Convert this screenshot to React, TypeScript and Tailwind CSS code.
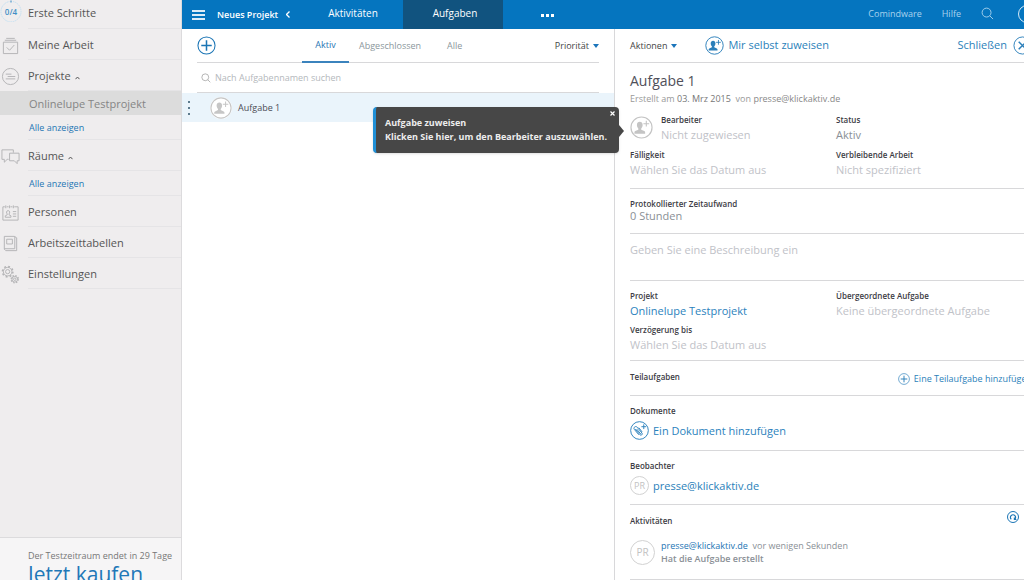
import type { ReactNode } from "react";

function PersonPlus({ className }: { className: string }) {
  return (
    <svg className={className} viewBox="0 0 24 24" fill="none" stroke="currentColor">
      <circle cx="12" cy="12" r="11" strokeWidth="1.2" />
      <path
        d="M7.2 9.4C7.2 7 8.500 6 10.200 6s3 1 3 3.400c0 1.500-.7 2.800-1.500 3.600v1.300l3.200 1.400c.6.300.9.700.9 1.400v1.300H4.600v-1.300c0-.7.3-1.100.9-1.400l3.200-1.400V13c-.8-.8-1.500-2.100-1.500-3.600z"
        fill="currentColor"
        stroke="none"
      />
      <path d="M17 5v6M14 8h6" strokeWidth="1.1" />
    </svg>
  );
}

function CirclePlus({ className }: { className: string }) {
  return (
    <svg className={className} viewBox="0 0 20 20" fill="none" stroke="currentColor">
      <circle cx="10" cy="10" r="9" strokeWidth="1.1" />
      <path d="M10 4.5v11M4.5 10h11" strokeWidth="1.6" />
    </svg>
  );
}

function SearchIcon({ className }: { className: string }) {
  return (
    <svg className={className} viewBox="0 0 14 14" fill="none" stroke="currentColor">
      <circle cx="6" cy="6" r="4.8" />
      <path d="M9.5 9.5L13 13" />
    </svg>
  );
}

function Caret() {
  return (
    <svg className="h-1 w-1.5 text-[#1b75bb]" viewBox="0 0 6 4" fill="currentColor">
      <path d="M0 0h6L3 4z" />
    </svg>
  );
}

const ICONS: Record<string, ReactNode> = {
  work: (
    <>
      <path d="M2.5 6.5h15v12h-15zM4 4.5h12M5.5 2.5h9" />
      <path d="M6 12l3 3 5-5.5" />
    </>
  ),
  projects: (
    <>
      <circle cx="10" cy="10" r="8.5" />
      <path d="M5 7.5h6M7 10h8M5 12.5h10" />
    </>
  ),
  rooms: (
    <>
      <path d="M8 13H6.5l-3 3v-3H1V3h12v3" />
      <path d="M9 6.5h10v8h-2v3l-3-3H9z" />
    </>
  ),
  people: (
    <>
      <path d="M2 4h2M6 4h2M10 4h2M14 4h4v14H2V4M5 2.5v3M9 2.5v3M13 2.5v3" />
      <path d="M4.5 15v-1.5l2-1v-1c-1-1-1-3.5 1-3.5s2 2.5 1 3.5v1l2 1V15zM12.5 9H16M12.5 11.5H16M12.5 14H16" />
    </>
  ),
  sheets: (
    <>
      <path d="M3.5 2.5h10.5l2.5 1.500v13.500H5l-1.500-1.500zM3.500 15.500h11V2.500" />
      <path d="M6 5.500h6v5H6z" />
    </>
  ),
  settings: (
    <>
      <circle cx="7" cy="7" r="2.2" />
      <circle cx="7" cy="7" r="4.5" />
      <circle cx="7" cy="7" r="5.5" strokeDasharray="2 2.3" strokeWidth="1.6" />
      <circle cx="14.5" cy="15" r="1.3" />
      <circle cx="14.5" cy="15" r="3" />
      <circle cx="14.5" cy="15" r="3.8" strokeDasharray="1.5 1.5" strokeWidth="1.4" />
    </>
  ),
};

function NavRow({ icon, label, open }: { icon: string; label: string; open?: boolean }) {
  return (
    <div className="flex h-[31px] items-stretch">
      <div className="flex w-7 items-center pt-0.5 pl-px">
        <svg className="size-[19px] text-[#b3b3b5]" viewBox="0 0 20 20" fill="none" stroke="currentColor">
          {ICONS[icon]}
        </svg>
      </div>
      <a href="#" className="flex flex-1 items-center gap-1 border-b border-[#e5e4e6] pt-0.5 text-[11px] text-[#555]">
        {label}
        {open && (
          <svg className="mt-1 h-1 w-[5px]" viewBox="0 0 5 4" fill="none" stroke="currentColor">
            <path d="M.5 3.2l2-2.2 2 2.2" />
          </svg>
        )}
      </a>
    </div>
  );
}

function NavShowAll() {
  return (
    <a href="#" className="ml-7 flex h-[25px] items-center border-b border-[#e5e4e6] pt-0.5 pl-px text-[9px] text-[#2476b4]">
      Alle anzeigen
    </a>
  );
}

function Sidebar() {
  return (
    <aside className="flex w-[182px] shrink-0 flex-col border-r border-[#dcdbdd] bg-[#efedee]">
      <nav className="flex-1">
        <div className="flex h-[29px]">
          <div className="w-7">
            <svg className="size-[22px]" viewBox="0 0 22 22" fill="none">
              <path d="M13 1.5a10.3 10.3 0 0 1-4 20.2A10.3 10.3 0 0 1 9.5 1.5" stroke="#c3e0f2" strokeDasharray="1.5 .7" />
              <path d="M11 .5v2" stroke="#2f87c4" />
              <text x="11" y="15" textAnchor="middle" fontSize="8" fontWeight="600" fill="#3f8fc6">
                0/4
              </text>
            </svg>
          </div>
          <a href="#" className="flex flex-1 items-center border-b border-[#e5e4e6] pb-0.5 text-[11px] text-[#555]">
            Erste Schritte
          </a>
        </div>
        <NavRow icon="work" label="Meine Arbeit" />
        <NavRow icon="projects" label="Projekte" open />
        <a href="#" className="flex h-6 items-center bg-[#dcdcdc] pt-0.5 pl-[29px] text-[11px] text-[#858585]">
          Onlinelupe Testprojekt
        </a>
        <NavShowAll />
        <NavRow icon="rooms" label="Räume" open />
        <NavShowAll />
        <NavRow icon="people" label="Personen" />
        <NavRow icon="sheets" label="Arbeitszeittabellen" />
        <NavRow icon="settings" label="Einstellungen" />
      </nav>
      <div className="h-[43px] overflow-hidden border-t border-[#dcdbdd] bg-[#f6f5f6] pt-3 pl-7 whitespace-nowrap">
        <p className="text-[9px] leading-3 text-[#777]">Der Testzeitraum endet in 29 Tage</p>
        <a href="#" className="block text-[21px] leading-6 text-[#1f78b8]">
          Jetzt kaufen
        </a>
      </div>
    </aside>
  );
}

function TopBar() {
  return (
    <header className="flex h-[29px] shrink-0 items-stretch bg-[#0575bf] text-[10px] text-white">
      <div className="flex w-[121px] items-center gap-3 pl-2.5">
        <button aria-label="Menü" className="flex w-[13px] flex-col gap-0.5">
          <span className="h-0.5 w-full bg-[#dcecf7]" />
          <span className="h-0.5 w-full bg-[#dcecf7]" />
          <span className="h-0.5 w-full bg-[#dcecf7]" />
        </button>
        <a href="#" className="flex items-center gap-2 text-[9px] font-semibold whitespace-nowrap">
          Neues Projekt
          <svg className="h-[7px] w-1" viewBox="0 0 4 7" fill="none" stroke="currentColor" strokeWidth="1.3">
            <path d="M3.5 .5l-3 3 3 3" />
          </svg>
        </a>
      </div>
      <a href="#" className="flex w-[100px] items-center justify-center pb-0.5">Aktivitäten</a>
      <a href="#" className="flex w-[100px] items-center justify-center bg-[#11537f] pb-0.5 pl-1">Aufgaben</a>
      <button aria-label="Mehr" className="flex w-[88px] items-center justify-center gap-0.5 pt-0.5">
        <span className="size-[3px] bg-white" />
        <span className="size-[3px] bg-white" />
        <span className="size-[3px] bg-white" />
      </button>
      <div className="-mr-3 ml-auto flex items-center gap-5 pb-0.5 text-[9px] text-[#a9d3ee]">
        <a href="#">Comindware</a>
        <a href="#">Hilfe</a>
        <button aria-label="Suchen" className="mr-1">
          <SearchIcon className="size-[13px]" />
        </button>
        <button aria-label="Profil" className="size-[18px] rounded-full border border-[#d5eaf7]" />
      </div>
    </header>
  );
}

function Tooltip() {
  return (
    <div
      role="tooltip"
      className="absolute top-3.5 -right-[5px] z-10 w-[246px] rounded border-l-[3px] border-[#1f8fd6] bg-[#474747] py-[9px] pl-[9px] text-[9px] leading-[14px] font-bold whitespace-nowrap text-[#ededed] shadow-sm"
    >
      <p>Aufgabe zuweisen</p>
      <p>Klicken Sie hier, um den Bearbeiter auszuwählen.</p>
      <button aria-label="Schließen" className="absolute top-1 right-1 text-white">
        <svg className="size-[5px]" viewBox="0 0 5 5" fill="none" stroke="currentColor" strokeWidth="1.2">
          <path d="M.5 .5l4 4M4.5 .5l-4 4" />
        </svg>
      </button>
      <svg className="absolute top-[18px] -right-[5px] h-3 w-[5px]" viewBox="0 0 5 12" fill="#474747">
        <path d="M0 0l5 6-5 6z" />
      </svg>
    </div>
  );
}

function TaskList() {
  return (
    <main className="min-w-0 flex-1 text-[9px]">
      <div className="mx-[15px] flex h-[34px] items-stretch border-b border-[#d8d8da]">
        <button aria-label="Neue Aufgabe" className="mr-[86px] text-[#1b75b5]">
          <CirclePlus className="size-[19px]" />
        </button>
        <button className="-mb-px w-[47px] border-b-2 border-[#3b83bd] font-medium text-[#2a77b3]">Aktiv</button>
        <button className="ml-2.5 text-[#8b979c]">Abgeschlossen</button>
        <button className="ml-[26px] text-[#8b979c]">Alle</button>
        <button className="ml-auto flex items-center gap-1 text-[#444]">
          Priorität
          <Caret />
        </button>
      </div>
      <label className="mx-[15px] flex h-[30px] items-center gap-1 border-b border-[#d8d8da] pl-1">
        <SearchIcon className="size-2.5 text-[#999]" />
        <input
          aria-label="Nach Aufgabennamen suchen"
          placeholder="Nach Aufgabennamen suchen"
          className="flex-1 outline-none placeholder:text-[#b4b8bc]"
        />
      </label>
      <div className="relative flex h-[29px] items-center bg-[#eaf4fb] pr-[22px] text-[#4c4c55]">
        <div className="flex w-7 flex-col gap-1 pl-1.5">
          <span className="size-0.5 bg-[#5d7b8d]" />
          <span className="size-0.5 bg-[#5d7b8d]" />
          <span className="size-0.5 bg-[#5d7b8d]" />
        </div>
        <span className="mr-1.5 rounded-full bg-white text-[#c6c6c6]">
          <PersonPlus className="size-[22px]" />
        </span>
        <a href="#">Aufgabe 1</a>
        <svg className="ml-auto h-1.5 w-[60px] text-[#a9b4bc]" viewBox="0 0 60 6" fill="none" stroke="currentColor">
          <path d="M1 5a3.500 3.500 0 0 1 6 0M54 5l2.500-3L59 5" />
        </svg>
        <Tooltip />
      </div>
    </main>
  );
}

function Field({ label, value, tone = "empty" }: { label: string; value: string; tone?: "empty" | "set" | "link" }) {
  const tones = { empty: "text-[#bfc2c8]", set: "text-[#8a9096]", link: "text-[#2b82bd]" };
  return (
    <div>
      <p className="text-[8px] leading-[14px] font-semibold text-[#3c3c44]">{label}</p>
      {tone === "link" ? (
        <a href="#" className={`block text-[11px] leading-[15px] ${tones.link}`}>{value}</a>
      ) : (
        <p className={`text-[11px] leading-[15px] ${tones[tone]}`}>{value}</p>
      )}
    </div>
  );
}

function Label({ children }: { children: ReactNode }) {
  return <h2 className="text-[8px] leading-3 font-semibold text-[#3c3c44]">{children}</h2>;
}

function Initials({ className }: { className: string }) {
  return (
    <span className={`flex shrink-0 items-center justify-center rounded-full border border-[#d2d2d2] text-[#c2c2c2] ${className}`}>
      PR
    </span>
  );
}

function TaskDetail() {
  return (
    <section className="w-[410px] shrink-0 overflow-hidden border-l border-[#d8d8da] pl-[15px]">
      {/* the panel is a little wider than its column and runs off the window */}
      <div className="min-w-[402px] whitespace-nowrap">
        <div className="flex h-[34px] items-center border-b border-[#d8d8da] text-[11px] text-[#2b7fba]">
          <button className="flex items-center gap-1 text-[9px] text-[#444]">
            Aktionen
            <Caret />
          </button>
          <button className="ml-7 flex items-center gap-1">
            <PersonPlus className="size-[19px]" />
            Mir selbst zuweisen
          </button>
          <button className="ml-auto flex items-center gap-1.5">
            Schließen
            <svg className="size-[19px]" viewBox="0 0 20 20" fill="none" stroke="currentColor">
              <circle cx="10" cy="10" r="9" />
              <path d="M6 6l8 8M14 6l-8 8" strokeWidth="1.6" />
            </svg>
          </button>
        </div>

        <div className="h-[126px] border-b border-[#d8d8da] pt-2">
          <h1 className="text-[14px] leading-5 text-[#50505a]">Aufgabe 1</h1>
          <p className="text-[9px] leading-4 text-[#999]">
            Erstellt am <span className="text-[#777]">03. Mrz 2015</span> &nbsp;von{" "}
            <span className="text-[#888]">presse@klickaktiv.de</span>
          </p>
          <div className="mt-1.5 grid grid-cols-[206px_1fr] gap-y-1.5">
            <div className="flex items-center gap-2">
              <PersonPlus className="size-[23px] text-[#c4c4c4]" />
              <Field label="Bearbeiter" value="Nicht zugewiesen" />
            </div>
            <Field label="Status" value="Aktiv" tone="set" />
            <Field label="Fälligkeit" value="Wählen Sie das Datum aus" />
            <Field label="Verbleibende Arbeit" value="Nicht spezifiziert" />
          </div>
        </div>

        <div className="h-[45px] border-b border-[#d8d8da] pt-[9px]">
          <Label>Protokollierter Zeitaufwand</Label>
          <p className="text-[11px] leading-3 text-[#8a9096]">0 Stunden</p>
        </div>

        <div className="h-[47px] border-b border-[#d8d8da] pt-2 text-[11px] leading-4 text-[#bfc2c8]">
          Geben Sie eine Beschreibung ein
        </div>

        <div className="grid h-20 grid-cols-[206px_1fr] content-start gap-y-[5px] border-b border-[#d8d8da] pt-2">
          <Field label="Projekt" value="Onlinelupe Testprojekt" tone="link" />
          <Field label="Übergeordnete Aufgabe" value="Keine übergeordnete Aufgabe" />
          <Field label="Verzögerung bis" value="Wählen Sie das Datum aus" />
        </div>

        <div className="flex h-[35px] items-start justify-between border-b border-[#d8d8da] pt-2.5">
          <Label>Teilaufgaben</Label>
          <button className="flex items-center gap-1 pt-px text-[9px] font-medium text-[#2b7fba]">
            <CirclePlus className="size-3" />
            Eine Teilaufgabe hinzufügen
          </button>
        </div>

        <div className="h-[55px] border-b border-[#d8d8da] pt-[9px]">
          <Label>Dokumente</Label>
          <button className="mt-1 flex items-center gap-1 text-[11px] leading-4 text-[#2b82bd]">
            <svg className="size-[19px]" viewBox="0 0 20 20" fill="none" stroke="currentColor">
              <circle cx="10" cy="10" r="9.3" />
              <path d="M5.5 8.5l5 6c1 1.2 3.2-.3 2.2-1.7L7.5 6.5C6 4.7 3 7 4.6 8.9l4.7 5.6M7 8.500l4.300 5.200M9.200 7l3.600 4.500" />
              <path d="M14.5 3.5v5M12 6h5" />
            </svg>
            Ein Dokument hinzufügen
          </button>
        </div>

        <div className="h-[54px] border-b border-[#d8d8da] pt-[9px]">
          <Label>Beobachter</Label>
          <div className="mt-1 flex items-center gap-1">
            <Initials className="size-[19px] text-[9px]" />
            <a href="#" className="text-[11px] leading-4 text-[#2b7fba]">presse@klickaktiv.de</a>
          </div>
        </div>

        <div className="h-[75px] border-b border-[#d8d8da] pt-1.5">
          <div className="flex items-start justify-between pr-[13px]">
            <div className="pt-1">
              <Label>Aktivitäten</Label>
            </div>
            <button aria-label="Aktualisieren" className="text-[#1b75b5]">
              <svg className="size-3" viewBox="0 0 12 12" fill="none" stroke="currentColor">
                <circle cx="6" cy="6" r="5.5" />
                <path d="M4.3 8.3A2.6 2.6 0 1 1 7.7 8.3M7.4 6.5v2h2" strokeWidth="1.2" />
              </svg>
            </button>
          </div>
          <div className="mt-3 flex items-center gap-1.5">
            <Initials className="size-[25px] text-[10px]" />
            <div className="text-[9px] leading-[13px] text-[#8a9096]">
              <p>
                <a href="#" className="text-[#2476b4]">presse@klickaktiv.de</a> &nbsp;vor wenigen Sekunden
              </p>
              <p className="font-semibold">Hat die Aufgabe erstellt</p>
            </div>
          </div>
        </div>
      </div>
    </section>
  );
}

export default function App() {
  return (
    <div className="flex h-screen overflow-hidden bg-white font-['Open_Sans','Noto_Sans',sans-serif]">
      <Sidebar />
      <div className="flex min-w-0 flex-1 flex-col overflow-hidden">
        <TopBar />
        <div className="flex min-h-0 flex-1">
          <TaskList />
          <TaskDetail />
        </div>
      </div>
    </div>
  );
}
